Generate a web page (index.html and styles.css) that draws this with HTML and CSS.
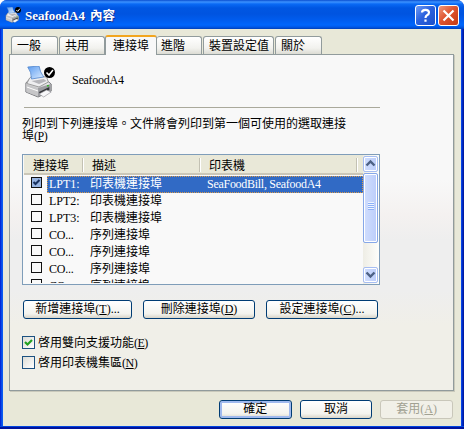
FILE: index.html
```html
<!DOCTYPE html>
<html lang="zh-Hant">
<head>
<meta charset="utf-8">
<title>SeafoodA4 內容</title>
<link rel="stylesheet" href="styles.css">
</head>
<body>
<svg width="0" height="0" class="defs">
  <defs>
    <linearGradient id="paper" x1="0" y1="0" x2="1" y2="1"><stop offset="0" stop-color="#5c9cf0"/><stop offset="1" stop-color="#dcecff"/></linearGradient>
    <linearGradient id="shell" x1="0" y1="0" x2="0" y2="1"><stop offset="0" stop-color="#fff"/><stop offset="1" stop-color="#a8a8ac"/></linearGradient>
    <symbol id="printer" viewBox="0 0 32 32" preserveAspectRatio="none">
      <path d="M2 17L7 12L25 15L29 18V25L15 31L2 26Z" fill="url(#shell)" stroke="#77787c"/>
      <path d="M2.500 18L15 22V30.500L2.500 26Z" fill="#c6c6c8"/>
      <path d="M15 22L28.500 18V25L15 30.500Z" fill="#9b9ca0"/>
      <path d="M6 12L9 10L24 11L26 16L16 21L3 17.500Z" fill="#eeeef0" stroke="#999"/>
      <path d="M4 1L16 0Q17 6 21 11L8 13Q8 6 4 1Z" fill="url(#paper)" stroke="#4c83cc" stroke-width=".8"/>
      <path d="M8 15L21 13L24 15L16 18Z" fill="#b5b5ba"/>
      <path d="M3 21L15 25" stroke="#fff"/>
      <path d="M16 26L27 21V24L17 28Z" fill="#34353a"/>
      <path d="M16 28L24 24L29 26L21 31Z" fill="#f8f8fa" stroke="#8a8a90" stroke-width=".6"/>
      <rect x="24.500" y="19" width="2" height="1.500" fill="#36b52c"/>
    </symbol>
  </defs>
</svg>
<div class="window">
  <header class="titlebar">
    <div class="title-icon">
      <svg width="15" height="16"><use href="#printer"/></svg>
      <svg class="mini-badge" width="6" height="6" viewBox="0 0 11 11"><circle cx="5.500" cy="5.500" r="5.500"/><path d="M2.500 5.500L5 8L9 3" fill="none" stroke="#fff" stroke-width="1.800"/></svg>
    </div>
    <h1><span class="latin">SeafoodA4</span>內容</h1>
    <div class="caption help"><svg width="19" height="19" viewBox="0 0 19 19"><path d="M6 6.500Q6 3.800 9.500 3.800Q13 3.800 13 6.500Q13 8.300 11 9.200Q9.500 10 9.500 12M9.500 13.500V15.700" fill="none" stroke="#fff" stroke-width="2.200"/></svg></div>
    <div class="caption close"><svg width="19" height="19" viewBox="0 0 19 19"><path d="M4.500 4.500L14.500 14.500M14.500 4.500L4.500 14.500" stroke="#fff" stroke-width="2.200"/></svg></div>
  </header>
  <main>
    <nav class="tabs">
      <div class="tab t1">一般</div>
      <div class="tab t2">共用</div>
      <div class="tab active">連接埠</div>
      <div class="tab t4">進階</div>
      <div class="tab t5">裝置設定值</div>
      <div class="tab t6">關於</div>
    </nav>
    <section class="panel">
      <div class="device">
        <div class="device-icon">
          <svg width="30" height="32"><use href="#printer"/></svg>
          <svg class="badge" width="11" height="11" viewBox="0 0 11 11"><circle cx="5.500" cy="5.500" r="5.500"/><path d="M2.500 5.500L5 8L9 3" fill="none" stroke="#fff" stroke-width="1.600"/></svg>
        </div>
        <span>SeafoodA4</span>
      </div>
      <p class="hint">列印到下列連接埠。文件將會列印到第一個可使用的選取連接<br>埠<span class="key">(<u>P</u>)</span></p>
      <div class="list">
        <div class="table">
          <div class="head"><span class="c1">連接埠</span><span class="c2">描述</span><span class="c3">印表機</span></div>
          <div class="row selected"><div class="box"><svg width="9" height="9" viewBox="0 0 9 9"><path d="M1.500 4L3.500 6L7.500 2" fill="none" stroke="#17305e" stroke-width="2"/></svg></div><div class="cells"><span class="port">LPT1:</span><span class="desc">印表機連接埠</span><span class="printers">SeaFoodBill, SeafoodA4</span></div></div>
          <div class="row"><div class="box"></div><div class="cells"><span class="port">LPT2:</span><span class="desc">印表機連接埠</span></div></div>
          <div class="row"><div class="box"></div><div class="cells"><span class="port">LPT3:</span><span class="desc">印表機連接埠</span></div></div>
          <div class="row"><div class="box"></div><div class="cells"><span class="port com">CO...</span><span class="desc">序列連接埠</span></div></div>
          <div class="row"><div class="box"></div><div class="cells"><span class="port com">CO...</span><span class="desc">序列連接埠</span></div></div>
          <div class="row"><div class="box"></div><div class="cells"><span class="port com">CO...</span><span class="desc">序列連接埠</span></div></div>
          <div class="row"><div class="box"></div><div class="cells"><span class="port com">CO...</span><span class="desc">序列連接埠</span></div></div>
        </div>
        <div class="scroll">
          <div class="arrow"><svg width="13" height="13" viewBox="0 0 13 13"><path d="M2.500 8.500L6.500 4.500L10.500 8.500" fill="none" stroke="#4d6185" stroke-width="2.400"/></svg></div>
          <div class="thumb"><i></i><i></i><i></i><i></i></div>
          <div class="arrow down"><svg width="13" height="13" viewBox="0 0 13 13"><path d="M2.500 4.500L6.500 8.500L10.500 4.500" fill="none" stroke="#4d6185" stroke-width="2.400"/></svg></div>
        </div>
      </div>
      <div class="actions">
        <div class="button b1">新增連接埠(<u>T</u>)...</div>
        <div class="button b2">刪除連接埠(<u>D</u>)</div>
        <div class="button b3">設定連接埠(<u>C</u>)...</div>
      </div>
      <div class="option"><div class="check"><svg width="11" height="11" viewBox="0 0 11 11"><path d="M2 5L4.500 7.500L9 3" fill="none" stroke="#21a121" stroke-width="2.200"/></svg></div>啓用雙向支援功能<span class="key">(<u>E</u>)</span></div>
      <div class="option"><div class="check"></div>啓用印表機集區<span class="key">(<u>N</u>)</span></div>
    </section>
    <footer>
      <div class="button default">確定</div>
      <div class="button">取消</div>
      <div class="button disabled">套用(<u>A</u>)</div>
    </footer>
  </main>
</div>
</body>
</html>
```
FILE: styles.css
```css
* { box-sizing: border-box; }
body {
  margin: 0;
  width: 464px;
  height: 429px;
  overflow: hidden;
  background: #fff;
  color: #000;
  font: 12px/16px "Liberation Serif", "Noto Sans CJK TC", serif;
  white-space: nowrap;
}
.defs { position: absolute; }
svg { display: block; }
u { text-underline-offset: 1px; text-decoration-thickness: 1px; }
.key { letter-spacing: -.5px; }

.window {
  width: 464px;
  height: 429px;
  border-radius: 7px 7px 0 0;
  overflow: hidden;
  background: linear-gradient(90deg, #0019cf 0, #0a5bf0 2px, #0a5bf0 461px, #0030d8 462px, #001590 464px);
  box-shadow: inset 0 -2px #00139c, inset 0 -3px #0046e0;
}
.titlebar {
  height: 29px;
  display: flex;
  align-items: flex-start;
  padding: 5px 5px 0;
  background: linear-gradient(#0a4ed0 0, #3c92ff 2px, #0a6af5 4px, #0056e2 8px, #0054e0 14px, #005cee 20px, #0066fc 25px, #0058e8 27px, #003fb8 29px);
}
.title-icon { position: relative; width: 16px; height: 16px; margin-top: 2px; }
.mini-badge { position: absolute; right: 0; top: 0; }
h1 {
  margin: 2px auto 0 4px;
  color: #fff;
  font-size: 12.5px;
  line-height: 18px;
  font-weight: bold;
  text-shadow: 1px 1px #0b2f94;
}
.latin { font-size: 13px; margin-right: 5px; }
.caption {
  width: 21px;
  height: 21px;
  border: 1px solid #fff;
  border-radius: 3px;
  background: linear-gradient(135deg, #6f9bf5, #2b62de 45%, #1b4fc9);
}
.close { margin-left: 2px; background: linear-gradient(135deg, #f0987d, #df5530 45%, #c53a13); }

main {
  height: 397px;
  margin: 0 3px;
  padding: 6px 8px 0 6px;
  background: #e8e8d8;
}
.tabs {
  height: 20px;
  padding-left: 2px;
  display: flex;
  align-items: flex-end;
  position: relative;
  z-index: 1;
}
.tab {
  height: 18px;
  padding: 1px 0 0 5px;
  border: 1px solid #919b9c;
  border-radius: 3px 3px 0 0;
  margin-bottom: 1px;
  border-bottom: 0;
  background: linear-gradient(#fff, #f2f2ee 65%, #dcdcd4);
}
.t1 { width: 47px; margin-right: 1px; }
.t2 { width: 46px; }
.active {
  width: 52px;
  height: 20px;
  margin-bottom: 0;
  padding-left: 7px;
  border-top: 2px solid #f2a51f;
  background: #f8f8f8;
}
.t4 { width: 45px; margin-right: 1px; padding-left: 4px; border-left: 0; }
.t5 { width: 71px; margin-right: 1px; }
.t6 { width: 47px; }

.panel {
  width: 445px;
  height: 337px;
  margin-top: -1px;
  padding: 10px 0 0 12px;
  border: 1px solid #919b9c;
  box-shadow: 1px 1px #c9c9bb;
  background: linear-gradient(#f8f8f8 0, #f8f8f8 125px, #f4f1f0 160px, #eee 185px, #eee 235px, #f0efe8 270px);
}
.device {
  width: 356px;
  height: 43px;
  margin-left: 2px;
  display: flex;
  border-bottom: 1px solid #aaa99b;
}
.device-icon { position: relative; width: 48px; padding-top: 1px; }
.badge { position: absolute; left: 20px; top: 2px; }
.device span { padding-top: 7px; letter-spacing: -.25px; }
.hint { margin: 10px 0 0; height: 36px; line-height: 12px; }
.list {
  width: 358px;
  height: 131px;
  display: flex;
  border: 1px solid #7f9db9;
  background: #f9f9f9;
}
.table { width: 340px; height: 128px; overflow: hidden; padding-left: 1px; }
.head {
  height: 20px;
  margin-bottom: 1px;
  display: flex;
  background: #e9e8d8;
  border-bottom: 2px solid #cbc7b8;
}
.head span { height: 14px; margin-top: 3px; line-height: 16px; border-right: 1px solid #c3c1b3; box-shadow: 1px 0 #fff; }
.c1 { width: 59px; padding-left: 9px; }
.c2 { width: 117px; padding-left: 9px; }
.c3 { width: 157px; padding-left: 9px; }
.row { height: 17px; display: flex; }
.box { width: 11px; height: 11px; margin: 1px 5px 0 7px; border: 1px solid #111; }
.cells { width: 316px; display: flex; padding-left: 2px; line-height: 17px; }
.port { width: 41px; }
.com { letter-spacing: -.2px; }
.desc { width: 117px; }
.printers { letter-spacing: -.28px; }
.selected .cells { padding: 0 0 0 1px; border: 1px dotted #d79a4c; color: #fff; background: #316ac5; line-height: 15px; }
.selected .box { background: #98b5e2; }
.scroll {
  width: 16px;
  height: 129px;
  padding: 1px 0;
  display: flex;
  flex-direction: column;
  background: linear-gradient(90deg, #eeede5, #fefefb);
}
.arrow, .thumb {
  width: 15px;
  border: 1px solid #a6bdf2;
  border-radius: 2px;
  box-shadow: inset 0 0 0 1px #fff;
  background: linear-gradient(90deg, #d0defe, #bccdfa);
}
.arrow { height: 16px; }
.thumb { height: 70px; padding-top: 28px; border-color: #86a7e8; margin-top: 1px; }
.thumb i { display: block; width: 6px; height: 1px; margin: 0 auto 1px; background: #eef4fe; box-shadow: 0 1px #8cb0f8; }
.down { margin-top: auto; }

.actions { display: flex; margin-top: 15px; padding-left: 1px; }
.button {
  width: 73px;
  height: 19px;
  border: 1px solid #003c74;
  border-radius: 3px;
  text-align: center;
  line-height: 17px;
  background: linear-gradient(#fff, #f3f3ee 75%, #d9d5c9);
}
.b1 { width: 109px; }
.b2 { width: 112px; margin-left: 11px; }
.b3 { width: 112px; margin-left: 11px; }
.option { display: flex; height: 20px; line-height: 14px; }
.actions + .option { margin-top: 17px; }
.check { width: 13px; height: 13px; margin-right: 3px; border: 1px solid #1c5180; background: linear-gradient(135deg, #dcdcd6, #fff); }
footer { display: flex; gap: 8px; margin: 9px 0 0 210px; }
.default { box-shadow: inset 0 0 0 2px #9fb9ee; }
.disabled { color: #a1a192; border-color: #c9c7ba; background: #f1f0e8; }
```
